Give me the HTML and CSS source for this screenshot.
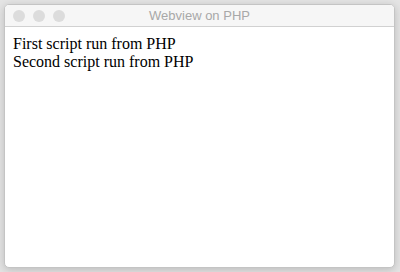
FILE: index.html
```html
<!DOCTYPE html>
<html lang="en">
<head>
  <meta charset="UTF-8">
  <title>Webview on PHP</title>
  <link rel="stylesheet" href="styles.css">
</head>
<body>
  <div class="window">
    <div class="titlebar">
      <div class="lights">
        <span class="light"></span>
        <span class="light"></span>
        <span class="light"></span>
      </div>
      <div class="title">Webview on PHP</div>
    </div>
    <div class="webview">
      <div>First script run from PHP</div>
      <div>Second script run from PHP</div>
    </div>
  </div>
</body>
</html>
```
FILE: styles.css
```css
html, body {
  margin: 0;
  padding: 0;
  height: 100%;
}
body {
  background: #e4e4e4;
  padding: 4px 5px 6px 4px;
  box-sizing: border-box;
}

.window {
  height: 262px;
  background: #fff;
  border: 1px solid #c4c4c4;
  border-radius: 5px;
  box-shadow: 0 2px 8px rgba(0, 0, 0, 0.18);
  overflow: hidden;
  display: flex;
  flex-direction: column;
}

.titlebar {
  height: 21px;
  background: #f6f6f6;
  border-bottom: 1px solid #d1d1d1;
  display: flex;
  align-items: center;
  position: relative;
}
.lights {
  display: flex;
  gap: 8px;
  padding-left: 8px;
}
.light {
  width: 12px;
  height: 12px;
  border-radius: 50%;
  background: #dcdcdc;
  border: 0 solid #d0d0d0;
}
.title {
  position: absolute;
  left: 0;
  right: 0;
  text-align: center;
  font-family: "Liberation Sans", Arial, sans-serif;
  font-size: 13px;
  color: #a8a8a8;
}

.webview {
  flex: 1;
  padding: 8px;
  font-family: "Liberation Serif", "Times New Roman", serif;
  font-size: 16px;
  line-height: 18px;
  color: #000;
}
```
